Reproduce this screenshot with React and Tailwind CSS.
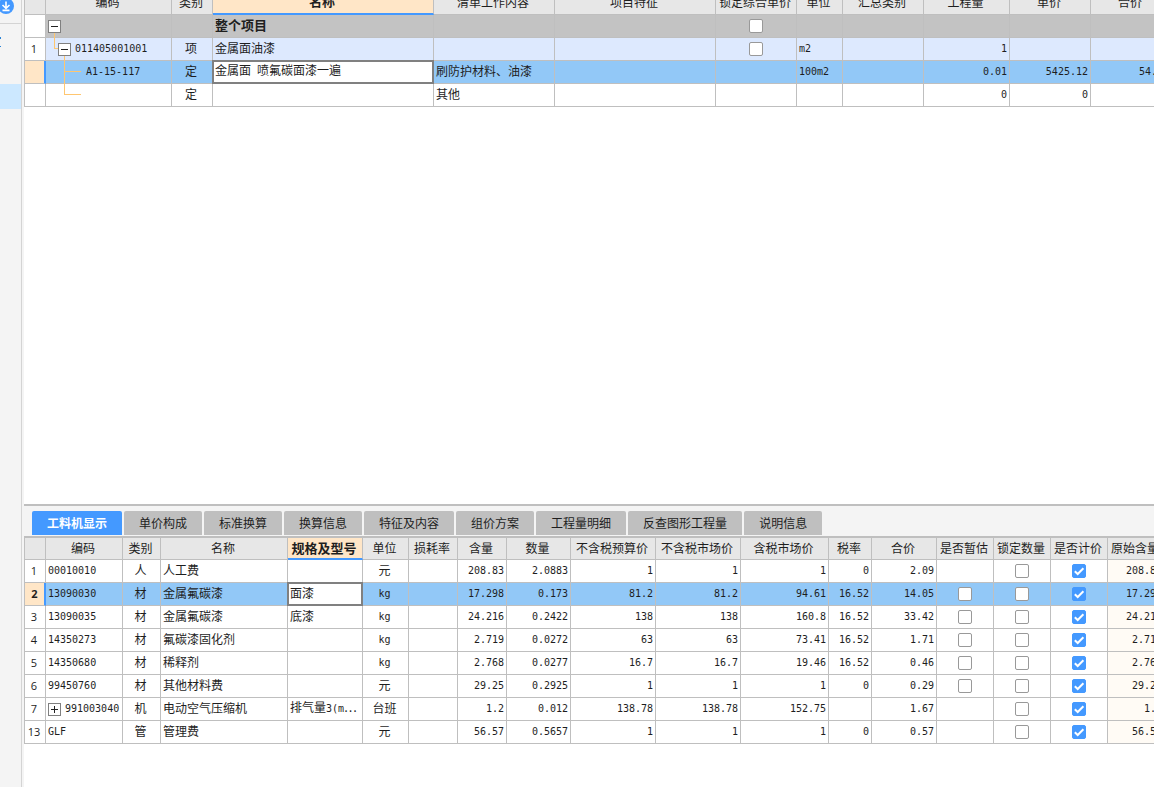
import React from "react";

const GRID_CELL = "relative h-[23px] border-r border-b border-[#bfbfbf] p-0";

// Latin runs use a half-width monospace face beside the full-width Chinese glyphs.
function MixedText({ children }) {
  const parts = String(children).split(/([\x20-\x7e]+)/).filter(Boolean);
  return parts.map((part, i) =>
    /^[\x20-\x7e]/.test(part) ? (
      <span key={i} className="font-['DejaVu_Sans_Mono',monospace] text-[10px] whitespace-pre">
        {part}
      </span>
    ) : (
      <span key={i}>{part}</span>
    )
  );
}

function CheckBox({ label, checked = false }) {
  return (
    <span className="mx-auto grid size-3.5">
      <input
        type="checkbox"
        aria-label={label}
        defaultChecked={checked}
        className="peer size-3.5 appearance-none rounded-[2px] border border-[#999999] bg-white [grid-area:1/1] checked:border-[#4499ff] checked:bg-[#4499ff]"
      />
      <svg
        viewBox="0 0 14 14"
        className="pointer-events-none invisible size-3.5 [grid-area:1/1] peer-checked:visible"
        fill="none"
        stroke="#ffffff"
        strokeWidth="2"
      >
        <path d="M2.8 7.2 5.7 10 11.4 4.2" />
      </svg>
    </span>
  );
}

function TreeToggle({ open, label }) {
  return (
    <button
      type="button"
      aria-label={label}
      aria-expanded={open}
      className="relative z-10 size-[13px] shrink-0 border border-[#808080] bg-white"
    >
      <svg viewBox="0 0 11 11" className="block size-[11px]" stroke="#222222" shapeRendering="crispEdges">
        <path d={open ? "M2 5.5H9" : "M2 5.5H9M5.5 2V9"} />
      </svg>
    </button>
  );
}

function TreeLines({ d }) {
  return (
    <svg
      width="40"
      height="23"
      className="pointer-events-none absolute top-0 left-0"
      fill="none"
      stroke="#ffc670"
      shapeRendering="crispEdges"
    >
      <path d={d} />
    </svg>
  );
}

function Cell({ children, align = "left", className = "", active = false }) {
  const isText = typeof children === "string";
  const justify = {
    left: "justify-start pl-0.5",
    center: isText ? "justify-center pr-0.5" : "justify-center",
    right: "justify-end pr-0.5",
  }[align];
  return (
    <td className={`${GRID_CELL} ${className} ${active ? "bg-white" : ""}`}>
      <div
        className={`flex h-[22px] items-center overflow-hidden whitespace-nowrap ${justify} ${isText ? "pb-0.5" : ""}`}
      >
        {isText ? (
          <span>
            <MixedText>{children}</MixedText>
          </span>
        ) : (
          children
        )}
      </div>
      {active && <span className="pointer-events-none absolute -inset-px z-10 border-2 border-[#808080]" />}
    </td>
  );
}

function RowNumber({ children, selected = false }) {
  return (
    <th
      scope="row"
      className={`h-[23px] border-b border-b-[#bfbfbf] p-0 text-center font-['Open_Sans',sans-serif] text-[11px] leading-4 ${
        selected
          ? "border-r-2 border-r-[#4499ff] bg-[#ffe6c7] font-bold"
          : "border-r border-r-[#bfbfbf] bg-white pr-0.5 font-normal"
      }`}
    >
      {children}
    </th>
  );
}

const headClass = (active) =>
  active
    ? "border-r border-b-2 border-r-[#bfbfbf] border-b-[#4499ff] bg-[#ffe6c7] py-0 pr-0.5 pl-0 text-[13px] font-bold"
    : "border-r border-b border-[#bfbfbf] bg-[#e7e7e7] py-0 pr-0.5 pl-0 font-normal";

const ITEM_COLUMNS = [
  ["", "w-[21px]"],
  ["编码", "w-[126px]"],
  ["类别", "w-[41px]"],
  ["名称", "w-[221px]"],
  ["清单工作内容", "w-[121px]"],
  ["项目特征", "w-[161px]"],
  ["锁定综合单价", "w-[81px]"],
  ["单位", "w-[46px]"],
  ["汇总类别", "w-[81px]"],
  ["工程量", "w-[86px]"],
  ["单价", "w-[81px]"],
  ["合价", "w-auto"],
];

function ItemTable() {
  return (
    <table className="w-full min-w-[1147px] table-fixed border-separate border-spacing-0">
      <colgroup>
        {ITEM_COLUMNS.map(([name, width]) => (
          <col key={name} className={width} />
        ))}
      </colgroup>
      <thead>
        <tr>
          {ITEM_COLUMNS.map(([name]) => (
            <th key={name} scope="col" className={headClass(name === "名称")}>
              <div
                className={`flex items-end justify-center overflow-hidden whitespace-nowrap ${
                  name === "名称" ? "h-[13px]" : "h-3.5"
                }`}
              >
                <span className="h-5 shrink-0 leading-4">{name}</span>
              </div>
            </th>
          ))}
        </tr>
      </thead>
      <tbody>
        <tr className="bg-[#c3c3c3]">
          <RowNumber />
          <Cell>
            <TreeLines d="M8.5 17V23" />
            <TreeToggle open label="折叠 整个项目" />
          </Cell>
          <Cell />
          <Cell className="text-[13px] font-bold">整个项目</Cell>
          <Cell />
          <Cell />
          <Cell align="center">
            <CheckBox label="锁定综合单价 整个项目" />
          </Cell>
          <Cell />
          <Cell />
          <Cell />
          <Cell />
          <Cell />
        </tr>
        <tr className="bg-[#dde9fe]">
          <RowNumber>1</RowNumber>
          <Cell>
            <TreeLines d="M8.5 0V11M8 10.5H12M18.5 17V23" />
            <span className="flex items-center gap-1 pl-2.5">
              <TreeToggle open label="折叠 011405001001" />
              <MixedText>011405001001</MixedText>
            </span>
          </Cell>
          <Cell align="center">项</Cell>
          <Cell>金属面油漆</Cell>
          <Cell />
          <Cell />
          <Cell align="center">
            <CheckBox label="锁定综合单价 金属面油漆" />
          </Cell>
          <Cell>m2</Cell>
          <Cell />
          <Cell align="right">1</Cell>
          <Cell />
          <Cell />
        </tr>
        <tr className="bg-[#92c8f7]">
          <RowNumber selected />
          <Cell>
            <TreeLines d="M18.5 0V23M18 10.5H35" />
            <span className="flex items-center pl-[38px]">
              <MixedText>A1-15-117</MixedText>
            </span>
          </Cell>
          <Cell align="center">定</Cell>
          <Cell active>金属面 喷氟碳面漆一遍</Cell>
          <Cell>刷防护材料、油漆</Cell>
          <Cell />
          <Cell />
          <Cell>100m2</Cell>
          <Cell />
          <Cell align="right">0.01</Cell>
          <Cell align="right">5425.12</Cell>
          <Cell align="right">54.25</Cell>
        </tr>
        <tr className="bg-white">
          <RowNumber />
          <Cell>
            <TreeLines d="M18.5 0V11M18 10.5H35" />
          </Cell>
          <Cell align="center">定</Cell>
          <Cell />
          <Cell>其他</Cell>
          <Cell />
          <Cell />
          <Cell />
          <Cell />
          <Cell align="right">0</Cell>
          <Cell align="right">0</Cell>
          <Cell />
        </tr>
      </tbody>
    </table>
  );
}

const TABS = [
  "工料机显示",
  "单价构成",
  "标准换算",
  "换算信息",
  "特征及内容",
  "组价方案",
  "工程量明细",
  "反查图形工程量",
  "说明信息",
];

const RESOURCE_COLUMNS = [
  ["", "w-[21px]"],
  ["编码", "w-[77px]"],
  ["类别", "w-[38px]"],
  ["名称", "w-[127px]"],
  ["规格及型号", "w-[75px]"],
  ["单位", "w-[46px]"],
  ["损耗率", "w-[49px]"],
  ["含量", "w-[49px]"],
  ["数量", "w-[64px]"],
  ["不含税预算价", "w-[85px]"],
  ["不含税市场价", "w-[85px]"],
  ["含税市场价", "w-[88px]"],
  ["税率", "w-[43px]"],
  ["合价", "w-[65px]"],
  ["是否暂估", "w-[57px]"],
  ["锁定数量", "w-[57px]"],
  ["是否计价", "w-[57px]"],
  ["原始含量", "w-auto"],
];

const RESOURCES = [
  { no: 1, code: "00010010", kind: "人", name: "人工费", spec: "", unit: "元", values: ["208.83", "2.0883", "1", "1", "1", "0", "2.09"] },
  { no: 2, code: "13090030", kind: "材", name: "金属氟碳漆", spec: "面漆", unit: "kg", values: ["17.298", "0.173", "81.2", "81.2", "94.61", "16.52", "14.05"], estimate: true, selected: true },
  { no: 3, code: "13090035", kind: "材", name: "金属氟碳漆", spec: "底漆", unit: "kg", values: ["24.216", "0.2422", "138", "138", "160.8", "16.52", "33.42"], estimate: true },
  { no: 4, code: "14350273", kind: "材", name: "氟碳漆固化剂", spec: "", unit: "kg", values: ["2.719", "0.0272", "63", "63", "73.41", "16.52", "1.71"], estimate: true },
  { no: 5, code: "14350680", kind: "材", name: "稀释剂", spec: "", unit: "kg", values: ["2.768", "0.0277", "16.7", "16.7", "19.46", "16.52", "0.46"], estimate: true },
  { no: 6, code: "99450760", kind: "材", name: "其他材料费", spec: "", unit: "元", values: ["29.25", "0.2925", "1", "1", "1", "0", "0.29"], estimate: true },
  { no: 7, code: "991003040", kind: "机", name: "电动空气压缩机", spec: "排气量3(m⋯", unit: "台班", values: ["1.2", "0.012", "138.78", "138.78", "152.75", "", "1.67"], expandable: true },
  { no: 13, code: "GLF", kind: "管", name: "管理费", spec: "", unit: "元", values: ["56.57", "0.5657", "1", "1", "1", "0", "0.57"] },
];

function ResourceTable() {
  return (
    <table className="w-full min-w-[1140px] table-fixed border-separate border-spacing-0">
      <colgroup>
        {RESOURCE_COLUMNS.map(([name, width]) => (
          <col key={name} className={width} />
        ))}
      </colgroup>
      <thead>
        <tr>
          {RESOURCE_COLUMNS.map(([name]) => (
            <th
              key={name}
              scope="col"
              className={`h-[22px] align-top leading-5 whitespace-nowrap ${headClass(name === "规格及型号")}`}
            >
              {name}
            </th>
          ))}
        </tr>
      </thead>
      <tbody>
        {RESOURCES.map((r) => (
          <tr key={r.no} className={r.selected ? "bg-[#92c8f7]" : "bg-white"}>
            <RowNumber selected={r.selected}>{r.no}</RowNumber>
            <Cell>
              {r.expandable ? (
                <span className="flex items-center gap-1">
                  <TreeToggle open={false} label={`展开 ${r.name}`} />
                  <MixedText>{r.code}</MixedText>
                </span>
              ) : (
                r.code
              )}
            </Cell>
            <Cell align="center">{r.kind}</Cell>
            <Cell>{r.name}</Cell>
            <Cell active={r.selected}>{r.spec}</Cell>
            <Cell align="center">{r.unit}</Cell>
            <Cell />
            {r.values.map((value, i) => (
              <Cell key={i} align="right">
                {value}
              </Cell>
            ))}
            <Cell align="center">{r.estimate && <CheckBox label={`是否暂估 ${r.name}`} />}</Cell>
            <Cell align="center">
              <CheckBox label={`锁定数量 ${r.name}`} />
            </Cell>
            <Cell align="center">
              <CheckBox label={`是否计价 ${r.name}`} checked />
            </Cell>
            <Cell align="right" className={r.selected ? "" : "bg-[#fffbf5]"}>
              {r.values[0]}
            </Cell>
          </tr>
        ))}
      </tbody>
    </table>
  );
}

function Sidebar() {
  return (
    <aside className="flex w-[22px] shrink-0 flex-col border-r border-[#d4d4d4] bg-[#f4f4f4]">
      <div className="h-6 border-b border-[#d4d4d4]">
        <button type="button" aria-label="下载" className="block">
          <svg width="14" height="14" viewBox="0 0 14 14" fill="none">
            <circle cx="6" cy="6" r="8" fill="#4499ff" />
            <path d="M6 1.5V8M2.5 5 6 8.3 9.5 5M2.5 10.4H9.5" stroke="#ffffff" strokeWidth="1.6" />
          </svg>
        </button>
      </div>
      <div className="h-[60px] pt-[13px]">
        <svg width="2" height="10" viewBox="0 0 2 10" fill="#2b83d6">
          <path d="M0 0H1V2H0ZM0 9H1V10H0Z" />
        </svg>
      </div>
      <div className="h-[25px] bg-[#cce8ff]" />
    </aside>
  );
}

export default function App() {
  return (
    <div className="flex min-h-screen overflow-hidden bg-[#f4f4f4] font-['Noto_Sans_CJK_SC',sans-serif] text-[12px] leading-4 text-[#1e1e1e]">
      <Sidebar />
      <main className="flex min-w-0 flex-1 flex-col pl-0.5">
        <section aria-label="清单项目" className="flex-1 overflow-hidden bg-white">
          <div className="w-full border-l border-[#bfbfbf]">
            <ItemTable />
          </div>
        </section>
        <section aria-label="工料机" className="overflow-hidden border-t-2 border-[#bfbfbf]">
          <div role="tablist" className="flex gap-0.5 pt-[5px] pl-2">
            {TABS.map((tab, i) => (
              <button
                key={tab}
                type="button"
                role="tab"
                aria-selected={i === 0}
                className={`h-6 rounded-t-[2px] px-[15px] whitespace-nowrap ${
                  i === 0 ? "bg-[#4499ff] font-bold text-white" : "bg-[#bfbfbf]"
                }`}
              >
                {tab}
              </button>
            ))}
          </div>
          <div className="mt-px border-t-2 border-[#bfbfbf] bg-white pb-[43px]">
            <div className="border-l border-[#bfbfbf]">
              <ResourceTable />
            </div>
          </div>
        </section>
      </main>
    </div>
  );
}
